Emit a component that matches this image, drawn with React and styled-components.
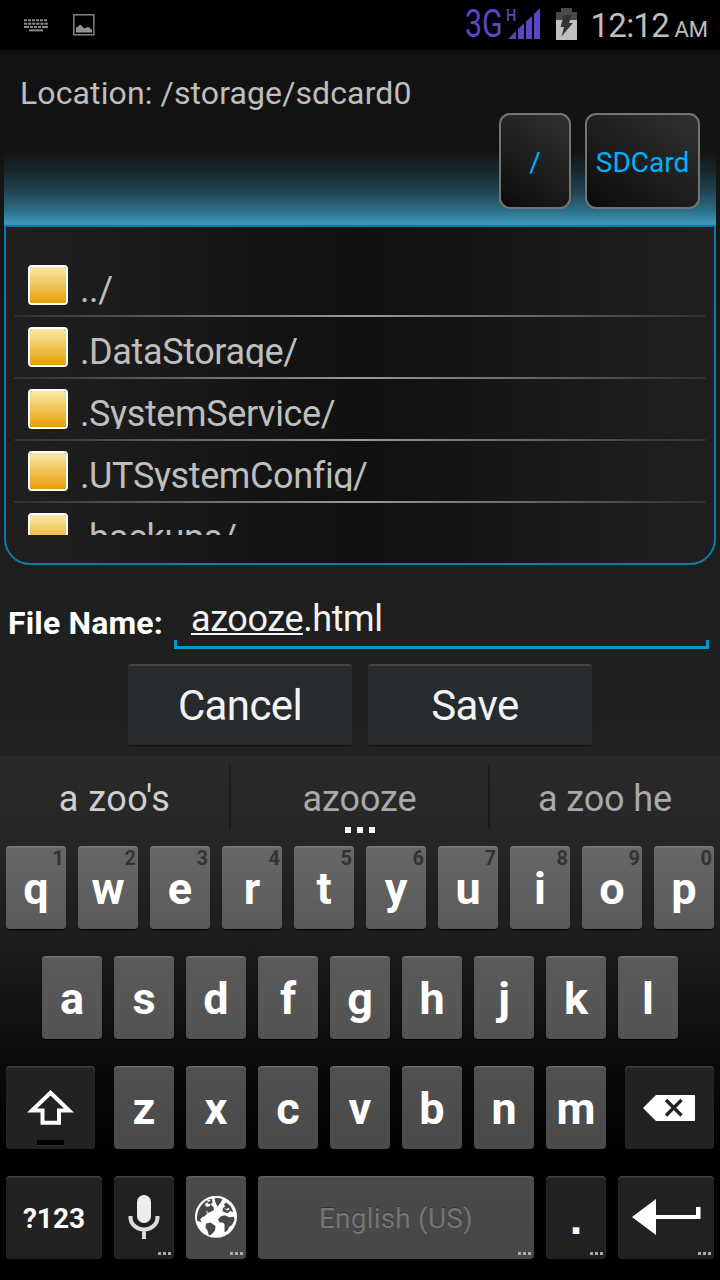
import styled, { createGlobalStyle, css } from "styled-components";

const folders = ["../", ".DataStorage/", ".SystemService/", ".UTSystemConfig/", ".backups/"];

const firstRow = ["q", "w", "e", "r", "t", "y", "u", "i", "o", "p"];
const secondRow = ["a", "s", "d", "f", "g", "h", "j", "k", "l"];
const thirdRow = ["z", "x", "c", "v", "b", "n", "m"];

const StatusBar = () => (
  <StatusBarStyle>
    <StatusGroup>
      <svg width="24" height="13" viewBox="0 0 24 13">
        <g stroke="#8a8a8a" strokeWidth="2" fill="none">
          <path d="M0 1.2h24" strokeDasharray="3 1" />
          <path d="M0 4.7h24" strokeDasharray="3.2 .9" />
          <path d="M0 8.1h24" strokeDasharray="5 1 3 1 3 1 3 1 6" />
          <path d="M5 11.4h14" />
        </g>
      </svg>
      <svg width="22" height="22" viewBox="0 0 22 22">
        <rect x=".8" y=".8" width="20" height="20" fill="none" stroke="#8a8a8a" strokeWidth="1.4" />
        <path d="M3 18.500v-5l2-1 1.500-1.500h1.500l2.500 3 1.500 .3 2.500-1.300 2 .5 2 2h.5v3z" fill="#8f8f8f" />
      </svg>
    </StatusGroup>
    <StatusGroup $right>
      <Network>3G</Network>
      <Signal>
        <SignalType>H</SignalType>
        <svg width="32" height="32" viewBox="0 0 32 32" fill="#5b45c4">
          <path d="M0 31L8 23v8zM10 21l6-5.500v15.500h-6zM18 13.500l6-5.500v23h-6zM26 6l6-6v31h-6z" />
        </svg>
      </Signal>
      <BatteryIcon width="22" height="33" viewBox="0 0 22 33">
        <path d="M0 4h5V0h11v4h5v8H0z" fill="#4a4a4a" />
        <path d="M0 12h21v20H0z" fill="#c0c0c0" />
        <path d="M8 7h8l-3 8h4L5.500 28.500 8 19H4.500z" fill="#333" />
      </BatteryIcon>
      <Clock>12:12</Clock>
      <Meridiem>AM</Meridiem>
    </StatusGroup>
  </StatusBarStyle>
);

const Browser = () => (
  <BrowserStyle>
    <Header>
      <Location>Location: /storage/sdcard0</Location>
      <Shortcuts>
        <Shortcut $width={72}>/</Shortcut>
        <Shortcut $width={115}>SDCard</Shortcut>
      </Shortcuts>
    </Header>
    <Panel>
      <List>
        {folders.map((name) => (
          <Row key={name}>
            <FolderIcon />
            <FolderName>{name}</FolderName>
          </Row>
        ))}
      </List>
    </Panel>
  </BrowserStyle>
);

const SaveForm = () => (
  <>
    <FileRow>
      <Label>File Name:</Label>
      <Field>
        <Composing>azooze</Composing>.html
      </Field>
    </FileRow>
    <Actions>
      <ActionButton>Cancel</ActionButton>
      <ActionButton $shift={10}>Save</ActionButton>
    </Actions>
  </>
);

const KeyDots = () => (
  <KeyDotsStyle>
    <i />
    <i />
    <i />
  </KeyDotsStyle>
);

// white disc for the ocean, continents cut in the key colour
const Globe = () => (
  <KeyIcon width="42" height="42" viewBox="0 0 42 42">
    <circle cx="21" cy="20.800" r="21" fill="#fff" />
    <g fill="#484848">
      <path d="M2 24.500C1.500 16 5 7.500 13.500 3.500l3.500-.8 .5 4-2 1.800 3 2.500 .5 3-3.500 2-3 1-2.500 3-2.500 1-2.500 2.500 2 3z" />
      <path d="M19.500 2.200l4-.3 4 1-2 4-3 3.500-2-4z" />
      <path d="M11 27.500l4.500-1 5 3.500-.5 4.500-3.500 4-2.500 1-1.500-5-2-3z" />
      <path d="M25.500 20.500l4-1.200 5 2 4.500-.6 .5 3.300-2.500 5-2.500 1.500-2.500 4.500-2.500 1.300V28l-2-1.500h-3l-1.500-3z" />
      <path d="M27.500 15l.5-3 2-1.500-1-2.500 2.500-1.500 4 3.500 3 6-3.500-1-2 2-3-.5z" />
    </g>
    <g fill="#fff">
      <path d="M10 7.500l2.500-1 1 1.500 2-.5-.5 2.500-2.500 1-2-1zM12 4.500l3-1 .5 1.500-2.500 1zM11 16l1-1 1 1-1 1z" />
      <path d="M29 12.500l3 .5 1.500-1.500 1 2-2 1z" />
    </g>
  </KeyIcon>
);

const Keyboard = () => (
  <KeyboardStyle>
    <Suggestions>
      <Suggestion $width={229} $bright>a zoo's</Suggestion>
      <Divider />
      <Suggestion $width={257}>
        azooze
        <MoreDots>
          <i />
          <i />
          <i />
        </MoreDots>
      </Suggestion>
      <Divider />
      <Suggestion $width={230}>a zoo he</Suggestion>
    </Suggestions>
    <KeyRow>
      {firstRow.map((letter, i) => (
        <Key key={letter} $top="#676767" $bottom="#5a5a5a">
          <KeyLabel>{letter}</KeyLabel>
          <Hint>{(i + 1) % 10}</Hint>
        </Key>
      ))}
    </KeyRow>
    <KeyRow>
      {secondRow.map((letter) => (
        <Key key={letter} $top="#5b5b5b" $bottom="#525252">
          <KeyLabel>{letter}</KeyLabel>
        </Key>
      ))}
    </KeyRow>
    <KeyRow $spread>
      <Key $dark $width={89}>
        <svg width="50" height="38" viewBox="0 0 50 38">
          <path d="M24.500 3.800L43 21.500H33V33.800H16.500V21.500H6z" fill="none" stroke="#fff" strokeWidth="4" />
        </svg>
        <ShiftLight />
      </Key>
      <Letters>
        {thirdRow.map((letter) => (
          <Key key={letter} $top="#505050" $bottom="#4a4a4a">
            <KeyLabel>{letter}</KeyLabel>
          </Key>
        ))}
      </Letters>
      <Key $dark $width={89}>
        <BackspaceIcon width="52" height="26" viewBox="0 0 52 26">
          <path d="M0 13L13 0h39v26H13z" fill="#fff" />
          <path d="M23 5l15.500 15.500M38.500 5L23 20.500" stroke="#222" strokeWidth="3.200" />
        </BackspaceIcon>
      </Key>
    </KeyRow>
    <KeyRow>
      <Key $dark $width={96} $size={28}>
        <KeyLabel>?123</KeyLabel>
      </Key>
      <Key $dark>
        <KeyIcon width="32" height="44" viewBox="0 0 32 44">
          <rect x="9" y="0" width="14" height="28" rx="7" fill="#eee" />
          <path d="M2.500 21v1.500a13.500 12 0 0 0 27 0V21M16 34v10" fill="none" stroke="#ddd" strokeWidth="4" />
        </KeyIcon>
        <KeyDots />
      </Key>
      <Key $top="#4a4a4a" $bottom="#474747">
        <Globe />
        <KeyDots />
      </Key>
      <Key $width={276} $top="#4a4a4a" $bottom="#474747">
        <Language>English (US)</Language>
        <KeyDots />
      </Key>
      <Key $dark>
        <Period>.</Period>
        <KeyDots />
      </Key>
      <Key $dark $width={96}>
        <KeyIcon width="69" height="36" viewBox="0 0 69 36">
          <path d="M0 18L24 0v16h40V8h4.500v12H24v16z" fill="#fff" />
        </KeyIcon>
        <KeyDots />
      </Key>
    </KeyRow>
  </KeyboardStyle>
);

const App = () => (
  <Screen>
    <GlobalStyle />
    <StatusBar />
    <Browser />
    <SaveForm />
    <Keyboard />
  </Screen>
);

const GlobalStyle = createGlobalStyle`
* {
    box-sizing: border-box;
}

body {
    margin: 0;
    background: #000;
    font-family: Roboto, sans-serif;
}

svg {
    display: block;
    flex: none;
}
`

const Screen = styled.main`
    display: flex;
    flex-direction: column;
    width: 720px;
    height: 1280px;
    overflow: hidden;
    background: linear-gradient(#111 50px, #222 756px);
`

const StatusBarStyle = styled.header`
    display: flex;
    justify-content: space-between;
    flex: none;
    height: 50px;
    padding: 0 12px 0 24px;
    background: #000;
`

const StatusGroup = styled.div`
    display: flex;
    align-items: ${({ $right }) => ($right ? "flex-start" : "center")};
    gap: ${({ $right }) => ($right ? "0" : "25px")};
    white-space: nowrap;
`

const Network = styled.span`
    width: 43px;
    color: #5b45c4;
    font-size: 38px;
    line-height: 48px;
    transform: scaleX(0.8);
    transform-origin: left;
`

const Signal = styled.div`
    position: relative;
    margin: 8px 16px 0 0;
`

const SignalType = styled.span`
    position: absolute;
    top: -1px;
    left: -2px;
    color: #5b45c4;
    font-size: 17px;
    font-weight: 500;
    line-height: 17px;
    transform: scaleX(0.85);
    transform-origin: left;
`

const BatteryIcon = styled.svg`
    margin: 8px 12px 0 0;
`

const Clock = styled.span`
    width: 84px;
    color: #bebebe;
    font-size: 33px;
    letter-spacing: -0.7px;
    line-height: 52px;
`

const Meridiem = styled.span`
    color: #bebebe;
    font-size: 22px;
    line-height: 59px;
`

const BrowserStyle = styled.section`
    flex: none;
    height: 515px;
    padding: 0 4px;
`

const Header = styled.div`
    display: flex;
    flex-direction: column;
    height: 175px;
    padding: 24px 16px 0;
    background: linear-gradient(transparent 100px, #17262c 120px, #1f4251 141px, #2b6880 158px, #3d98be 175px);
`

const Location = styled.div`
    height: 39px;
    color: #bebebe;
    font-size: 32px;
    letter-spacing: 0.11px;
    line-height: 38px;
`

const Shortcuts = styled.div`
    display: flex;
    justify-content: flex-end;
    gap: 14px;
`

const Shortcut = styled.button`
    width: ${({ $width }) => $width}px;
    height: 96px;
    padding: 2px 0 0;
    border: 2px solid #747474;
    border-radius: 11px;
    background: linear-gradient(35deg, #0a0a0a, #1c1e1d 45%, #303130);
    color: #00b2fc;
    font: 28px Roboto, sans-serif;
`

const Panel = styled.div`
    height: 340px;
    padding: 28px 8px;
    border: 2px solid #0b7aa7;
    border-radius: 0 0 26px 26px;
    background: linear-gradient(to right, #202020, #101010 50%, #202020);
`

const List = styled.div`
    height: 280px;
    overflow: hidden;
`

const Row = styled.div`
    display: flex;
    gap: 12px;
    height: 62px;
    padding: 10px 14px 0;
    border-bottom: 2px solid;
    border-image: linear-gradient(to right, #303030, #9a9a9a 50%, #303030) 1;
`

const FolderIcon = styled.div`
    width: 40px;
    height: 40px;
    border: 2px solid #fff;
    border-radius: 4px;
    background: linear-gradient(#f9e9a8, #e99e06) padding-box;
`

const FolderName = styled.div`
    height: 40px;
    overflow: hidden;
    color: #bebebe;
    font-size: 36px;
    letter-spacing: -0.38px;
    line-height: 51px;
`

const FileRow = styled.div`
    display: flex;
    flex: none;
    height: 99px;
    padding: 27px 11px 0 8px;
`

const Label = styled.label`
    width: 166px;
    color: #fff;
    font-size: 32px;
    font-weight: 700;
    letter-spacing: 0.15px;
    line-height: 62px;
    white-space: nowrap;
`

const Field = styled.div`
    flex: 1;
    height: 57px;
    padding-left: 17px;
    background:
        linear-gradient(#0099cc, #0099cc) left bottom / 3px 9px no-repeat,
        linear-gradient(#0099cc, #0099cc) right bottom / 3px 9px no-repeat,
        linear-gradient(#0099cc, #0099cc) bottom / 100% 3px no-repeat;
    color: #f3f3f3;
    font-size: 36px;
    letter-spacing: -0.4px;
    line-height: 54px;
`

const Composing = styled.span`
    display: inline-block;
    height: 43px;
    border-bottom: 2px solid #f3f3f3;
`

const Actions = styled.div`
    display: flex;
    flex: none;
    justify-content: center;
    gap: 16px;
    height: 92px;
`

const ActionButton = styled.button`
    width: 224px;
    height: 81px;
    padding: 0 ${({ $shift = 0 }) => $shift}px 0 0;
    border: 0;
    border-top: 2px solid #44484b;
    border-radius: 3px;
    background: #262b2f;
    box-shadow: 0 1px 1px #111;
    color: #f3f3f3;
    font: 42px Roboto, sans-serif;
    letter-spacing: -0.6px;
`

const KeyboardStyle = styled.section`
    display: flex;
    flex-direction: column;
    flex: none;
    align-items: center;
    height: 524px;
    border-top: 1px solid #2d2d2d;
    background: linear-gradient(#292929, #262626 90px, #191919 210px, #0a0a0a 310px, #000 400px);
`

const Suggestions = styled.div`
    display: flex;
    flex: none;
    width: 720px;
    height: 89px;
`

const Suggestion = styled.div`
    position: relative;
    width: ${({ $width }) => $width}px;
    color: ${({ $bright }) => ($bright ? "#cfcfcf" : "#a9a9a9")};
    font-size: 36px;
    letter-spacing: ${({ $bright }) => ($bright ? "0.5px" : "-0.1px")};
    line-height: 84px;
    text-align: center;
`

const Divider = styled.div`
    width: 2px;
    height: 64px;
    margin-top: 8px;
    background: #1c1c1c;
`

const MoreDots = styled.div`
    position: absolute;
    top: 70px;
    left: 114px;
    display: flex;
    gap: 6px;

    i {
        width: 6px;
        height: 6px;
        background: #f3f3f3;
    }
`

const KeyRow = styled.div`
    display: flex;
    flex: none;
    gap: ${({ $spread }) => ($spread ? "19px" : "12px")};
    height: 110px;
`

const Letters = styled.div`
    display: flex;
    gap: 12px;
`

const Key = styled.div`
    position: relative;
    display: flex;
    align-items: center;
    justify-content: center;
    flex: none;
    width: ${({ $width = 60 }) => $width}px;
    height: 83px;
    border-radius: 4px;
    background: linear-gradient(${({ $top }) => $top}, ${({ $bottom }) => $bottom});
    box-shadow: inset 0 1.5px 1px rgba(255, 255, 255, 0.15), 0 1px 1px #000;
    color: #fff;
    font-size: ${({ $size = 45 }) => $size}px;
    font-weight: 700;
    line-height: 1;

    ${({ $dark }) => $dark && css`
        background: #222;
    `}
`

const KeyLabel = styled.span`
    padding-top: 2px;
`

const Period = styled.span`
    padding-top: 2px;
    font-family: "Liberation Sans", sans-serif;
`

const KeyIcon = styled.svg`
    margin-bottom: 2px;
`

const BackspaceIcon = styled.svg`
    margin-right: 2px;
`

const Hint = styled.span`
    position: absolute;
    top: 2px;
    right: 2px;
    color: #333;
    font-size: 20px;
`

const ShiftLight = styled.div`
    position: absolute;
    bottom: 3px;
    left: 31px;
    width: 27px;
    height: 6px;
    border-bottom: 1px solid #333;
    background: #000;
`

const Language = styled.span`
    padding-top: 2px;
    color: #757575;
    font-size: 28px;
    font-weight: 400;
    letter-spacing: 0.2px;
    text-shadow: 0 -1px 0 #333;
`

const KeyDotsStyle = styled.div`
    position: absolute;
    right: 3px;
    bottom: 4px;
    display: flex;
    gap: 2px;

    i {
        width: 3px;
        height: 3px;
        background: #aaa;
    }
`

export default App;
